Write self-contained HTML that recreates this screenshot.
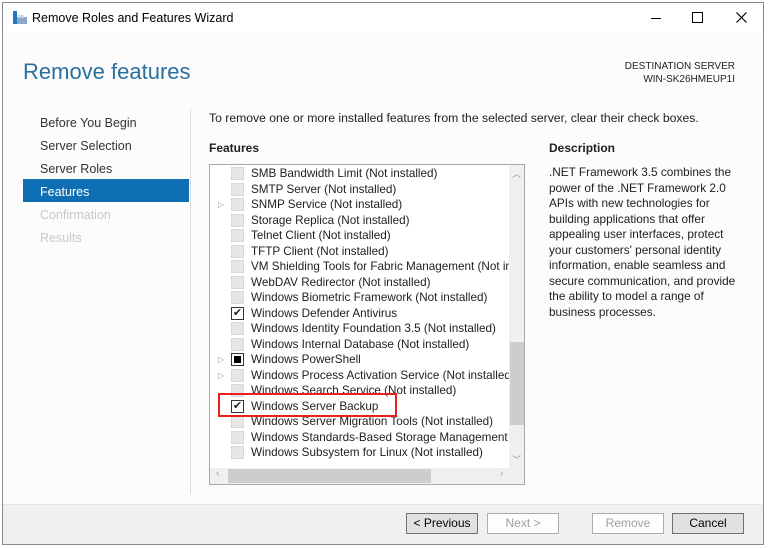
<!DOCTYPE html>
<html><head><style>
*{margin:0;padding:0;box-sizing:border-box}
body{width:768px;height:548px;background:#fff;font-family:"Liberation Sans",sans-serif;font-size:12px;color:#1e1e1e;position:relative;overflow:hidden}
.a{position:absolute;white-space:nowrap}
#win{position:absolute;left:2px;top:2px;width:762px;height:543px;border:1px solid #8a8a8a;background:#fcfcfc}
.nav{font-size:12.5px;color:#333}
.row{position:absolute;left:0;height:15px;line-height:15px;font-size:11.7px}
.cb{position:absolute;left:21px;top:1px;width:13px;height:13px;background:#e6e6e6;border:1px solid #d8d8d8}
.tx{position:absolute;left:41px;top:0}
.btn{position:absolute;top:513px;height:21px;border:1px solid #adadad;background:#fdfdfd;color:#a0a0a0;text-align:center;line-height:19px;font-size:12px}
</style></head><body>
<div id="win">
<div class="a" style="left:0;top:0;width:760px;height:30px;background:#fff"></div>
<svg class="a" style="left:9px;top:8px" width="16" height="14"><rect x="1" y="0" width="4" height="13" fill="#1e78c8"/><rect x="5" y="6" width="10" height="7" fill="#8aa8c8"/><rect x="6" y="4" width="6" height="3" fill="#c9d8e8"/></svg>
<div class="a" style="left:29px;top:8px;font-size:12.5px;color:#000">Remove Roles and Features Wizard</div>
<div class="a" style="left:648px;top:15px;width:10px;height:1px;background:#000"></div>
<div class="a" style="left:689px;top:9px;width:11px;height:11px;border:1px solid #000"></div>
<svg class="a" style="left:733px;top:9px" width="11" height="11"><path d="M0.5 0.5L10.5 10.5M10.5 0.5L0.5 10.5" stroke="#000" stroke-width="1.2"/></svg>
<div class="a" style="left:20px;top:56px;font-size:22px;color:#2a6fa0;font-weight:300">Remove features</div>
<div class="a" style="left:590px;top:57px;font-size:10px;text-align:right;width:142px;line-height:13px;color:#222">DESTINATION SERVER<br>WIN-SK26HMEUP1I</div>
<div class="a" style="left:187px;top:106px;width:1px;height:385px;background:#dcdcdc"></div>
<div class="a nav" style="left:37px;top:113px">Before You Begin</div>
<div class="a nav" style="left:37px;top:136px">Server Selection</div>
<div class="a nav" style="left:37px;top:159px">Server Roles</div>
<div class="a" style="left:20px;top:176px;width:166px;height:23px;background:#0f6fb5"></div>
<div class="a nav" style="left:37px;top:182px;color:#fff">Features</div>
<div class="a nav" style="left:37px;top:205px;color:#c8c8c8">Confirmation</div>
<div class="a nav" style="left:37px;top:228px;color:#c8c8c8">Results</div>
<div class="a" style="left:206px;top:108px;font-size:12.2px">To remove one or more installed features from the selected server, clear their check boxes.</div>
<div class="a" style="left:206px;top:138px;font-weight:bold;font-size:12px">Features</div>
<div class="a" style="left:546px;top:138px;font-weight:bold;font-size:12px">Description</div>
<div class="a" style="left:546px;top:162px;font-size:11.8px;line-height:15.5px;white-space:normal;width:190px">.NET Framework 3.5 combines the power of the .NET Framework 2.0 APIs with new technologies for building applications that offer appealing user interfaces, protect your customers' personal identity information, enable seamless and secure communication, and provide the ability to model a range of business processes.</div>
<div class="a" style="left:206px;top:161px;width:316px;height:321px;border:1px solid #a8a8a8;background:#fff;overflow:hidden">
<div style="position:absolute;left:0;top:-2px;width:299px;height:305px;overflow:hidden">
<div class="row" style="top:3px"><div class="cb"></div><div class="tx">SMB Bandwidth Limit (Not installed)</div></div>
<div class="row" style="top:18.5px"><div class="cb"></div><div class="tx">SMTP Server (Not installed)</div></div>
<div class="row" style="top:34px"><span style="position:absolute;left:8px;font-size:8px;color:#999">▷</span><div class="cb"></div><div class="tx">SNMP Service (Not installed)</div></div>
<div class="row" style="top:49.5px"><div class="cb"></div><div class="tx">Storage Replica (Not installed)</div></div>
<div class="row" style="top:65px"><div class="cb"></div><div class="tx">Telnet Client (Not installed)</div></div>
<div class="row" style="top:80.5px"><div class="cb"></div><div class="tx">TFTP Client (Not installed)</div></div>
<div class="row" style="top:96px"><div class="cb"></div><div class="tx">VM Shielding Tools for Fabric Management (Not installed)</div></div>
<div class="row" style="top:111.5px"><div class="cb"></div><div class="tx">WebDAV Redirector (Not installed)</div></div>
<div class="row" style="top:127px"><div class="cb"></div><div class="tx">Windows Biometric Framework (Not installed)</div></div>
<div class="row" style="top:142.5px"><div class="cb" style="background:#fff;border-color:#333;font-size:11px;line-height:11px;text-align:center">✔</div><div class="tx">Windows Defender Antivirus</div></div>
<div class="row" style="top:158px"><div class="cb"></div><div class="tx">Windows Identity Foundation 3.5 (Not installed)</div></div>
<div class="row" style="top:173.5px"><div class="cb"></div><div class="tx">Windows Internal Database (Not installed)</div></div>
<div class="row" style="top:189px"><span style="position:absolute;left:8px;font-size:8px;color:#999">▷</span><div class="cb" style="background:#fff;border-color:#333"><div style="margin:2px;width:7px;height:7px;background:#000"></div></div><div class="tx">Windows PowerShell</div></div>
<div class="row" style="top:204.5px"><span style="position:absolute;left:8px;font-size:8px;color:#999">▷</span><div class="cb"></div><div class="tx">Windows Process Activation Service (Not installed)</div></div>
<div class="row" style="top:220px"><div class="cb"></div><div class="tx">Windows Search Service (Not installed)</div></div>
<div class="row" style="top:235.5px"><div class="cb" style="background:#fff;border-color:#333;font-size:11px;line-height:11px;text-align:center">✔</div><div class="tx">Windows Server Backup</div></div>
<div class="row" style="top:251px"><div class="cb"></div><div class="tx">Windows Server Migration Tools (Not installed)</div></div>
<div class="row" style="top:266.5px"><div class="cb"></div><div class="tx">Windows Standards-Based Storage Management (Not installed)</div></div>
<div class="row" style="top:282px"><div class="cb"></div><div class="tx">Windows Subsystem for Linux (Not installed)</div></div>
</div>
<div style="position:absolute;left:299px;top:0;width:15px;height:303px;background:#f0f0f0"></div>
<div style="position:absolute;left:300px;top:177px;width:14px;height:83px;background:#cdcdcd"></div>
<div style="position:absolute;left:302px;top:2px;font-size:9px;color:#999">︿</div>
<div style="position:absolute;left:302px;top:288px;font-size:9px;color:#999">﹀</div>
<div style="position:absolute;left:0;top:303px;width:314px;height:16px;background:#f0f0f0"></div>
<div style="position:absolute;left:18px;top:304px;width:203px;height:14px;background:#cdcdcd"></div>
<div style="position:absolute;left:6px;top:303px;font-size:10px;color:#999">‹</div>
<div style="position:absolute;left:290px;top:303px;font-size:10px;color:#999">›</div>
<div style="position:absolute;left:8px;top:228px;width:179px;height:24px;border:2px solid #e8211e"></div>
</div>
<div class="a" style="left:0;top:501px;width:760px;height:40px;background:#f0f0f0;border-top:1px solid #e4e4e4"></div>
<div class="btn" style="left:403px;width:72px;background:#e1e1e1;border-color:#707070;color:#000;top:510px">&lt; Previous</div>
<div class="btn" style="left:484px;width:72px;top:510px">Next &gt;</div>
<div class="btn" style="left:589px;width:72px;top:510px">Remove</div>
<div class="btn" style="left:669px;width:72px;background:#e1e1e1;border-color:#707070;color:#000;top:510px">Cancel</div>
</div>
</body></html>
